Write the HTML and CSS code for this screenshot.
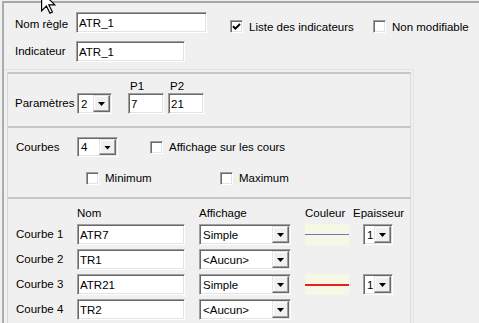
FILE: index.html
```html
<!DOCTYPE html>
<html lang="fr">
<head>
    <meta charset="UTF-8">
    <meta name="viewport" content="width=device-width, initial-scale=1.0">
    <title>Règle ATR_1</title>
    <link rel="stylesheet" href="styles.css">
</head>
<body>
    <div class="frame">
        <div class="head">
            <div class="head-row">
                <span class="lbl lbl-low">Nom règle</span>
                <input class="field w-nom" type="text" value="ATR_1">
                <label class="check check-liste"><span class="box"><svg width="9" height="9" viewBox="0 0 9 9"><path d="M1 4.2 L3.4 6.6 L8 2" fill="none" stroke="#000" stroke-width="2"/></svg></span>Liste des indicateurs</label>
                <label class="check check-top"><span class="box"></span>Non modifiable</label>
            </div>
            <div class="head-row">
                <span class="lbl">Indicateur</span>
                <input class="field w-ind" type="text" value="ATR_1">
            </div>
        </div>

        <div class="outer">
            <!-- paramètres -->
            <div class="group params">
                <span class="lbl-param">Paramètres</span>
                <div class="combo w-nb"><span>2</span><span class="btn"><i class="arrow"></i></span></div>
                <div class="param p1">
                    <span class="plbl">P1</span>
                    <input class="field w-p" type="text" value="7">
                </div>
                <div class="param">
                    <span class="plbl">P2</span>
                    <input class="field w-p" type="text" value="21">
                </div>
            </div>

            <!-- courbes -->
            <div class="group courbes">
                <div class="c-row">
                    <span class="lbl">Courbes</span>
                    <div class="combo w-courbes"><span>4</span><span class="btn"><i class="arrow"></i></span></div>
                    <label class="check check-cours"><span class="box"></span>Affichage sur les cours</label>
                </div>
                <div class="c-row2">
                    <label class="check check-min"><span class="box"></span>Minimum</label>
                    <label class="check"><span class="box"></span>Maximum</label>
                </div>
            </div>

            <!-- tableau des courbes -->
            <div class="group table">
                <span></span>
                <span class="th">Nom</span>
                <span class="th">Affichage</span>
                <span class="th">Couleur</span>
                <span class="th th-ep">Epaisseur</span>

                <span class="lbl">Courbe 1</span>
                <input class="field" type="text" value="ATR7">
                <div class="combo"><span>Simple</span><span class="btn"><i class="arrow"></i></span></div>
                <div class="swatch"><i class="line line-blue"></i></div>
                <div class="combo"><span>1</span><span class="btn"><i class="arrow"></i></span></div>

                <span class="lbl">Courbe 2</span>
                <input class="field" type="text" value="TR1">
                <div class="combo"><span>&lt;Aucun&gt;</span><span class="btn"><i class="arrow"></i></span></div>
                <span></span>
                <span></span>

                <span class="lbl">Courbe 3</span>
                <input class="field" type="text" value="ATR21">
                <div class="combo"><span>Simple</span><span class="btn"><i class="arrow"></i></span></div>
                <div class="swatch"><i class="line line-red"></i></div>
                <div class="combo"><span>1</span><span class="btn"><i class="arrow"></i></span></div>

                <span class="lbl">Courbe 4</span>
                <input class="field" type="text" value="TR2">
                <div class="combo"><span>&lt;Aucun&gt;</span><span class="btn"><i class="arrow"></i></span></div>
                <span></span>
                <span></span>
            </div>
        </div>
    </div>

    <svg class="cursor" width="15" height="23" viewBox="0 0 12.5 19">
        <polygon points="0.5,0.5 0.5,16.5 4.5,12.5 7.5,18.5 9.5,17.5 6.5,11.5 11.5,11.5" fill="#fff" stroke="#000" stroke-width="1"/>
    </svg>
</body>
</html>
```

FILE: styles.css
```css
*{
    margin: 0;
    padding: 0;
    box-sizing: border-box;
}
body{
    background: #f0f0f0;
    font: 11.5px "Liberation Sans", Arial, sans-serif;
    color: #000;
    overflow: hidden;
}
.frame{
    margin: 1px 0 0 2px;
    height: 322px;
    border-top: 2px solid #a6a6a6;
    border-left: 2px solid #acacac;
}
.cursor{
    position: absolute;
    left: 41px;
    top: -9px;
}

/* champs */
.field{
    display: block;
    height: 21px;
    padding: 0 2px;
    font: inherit;
    color: #000;
    background: #fff;
    border: 1px solid;
    border-color: #a0a0a0 #fff #fff #a0a0a0;
    box-shadow: inset 1px 1px 0 #696969, inset -1px -1px 0 #e3e3e3;
    outline: none;
}
.combo{
    display: flex;
    align-items: center;
    height: 21px;
    padding-left: 3px;
    background: #fff;
    border: 1px solid;
    border-color: #a0a0a0 #fff #fff #a0a0a0;
    box-shadow: inset 1px 1px 0 #696969, inset -1px -1px 0 #e3e3e3;
    white-space: nowrap;
}
.combo .btn{
    margin: 1px 1px 1px auto;
    width: 17px;
    height: 17px;
    display: flex;
    align-items: center;
    justify-content: center;
    background: #f0f0f0;
    border: 1px solid;
    border-color: #e3e3e3 #696969 #696969 #e3e3e3;
    box-shadow: inset -1px -1px 0 #a0a0a0, inset 1px 1px 0 #fff;
}
.arrow{
    display: block;
    width: 7px;
    height: 4px;
    background: #000;
    clip-path: polygon(0 0, 100% 0, 50% 100%);
    margin-top: 1px;
}

/* cases à cocher */
.check{
    display: flex;
    align-items: center;
    height: 13px;
    white-space: nowrap;
}
.box{
    width: 13px;
    height: 13px;
    margin-right: 6px;
    display: flex;
    align-items: center;
    justify-content: center;
    background: #fff;
    border: 1px solid;
    border-color: #a0a0a0 #fff #fff #a0a0a0;
    box-shadow: inset 1px 1px 0 #696969, inset -1px -1px 0 #e3e3e3;
}

/* en-tête */
.head{
    padding: 9px 0 7px 11px;
}
.head-row{
    display: flex;
    align-items: flex-start;
    height: 21px;
}
.head-row + .head-row{
    margin-top: 8px;
}
.lbl{
    line-height: 21px;
    white-space: nowrap;
}
.head .lbl{
    width: 61px;
}
.lbl-low{
    padding-top: 2px;
}
.w-nom{ width: 131px; }
.w-ind{ width: 109px; }
.check-top{
    margin-top: 8px;
}
.check-liste{
    margin: 8px 0 0 23px;
    width: 143px;
}

/* groupes */
.outer{
    width: 410px;
    height: 260px;
    padding: 2px 2px 0 3px;
    border-top: 1px solid #e3e3e3;
    border-right: 1px solid #e3e3e3;
}
.group{
    border-top: 2px solid #c6c6c6;
    border-left: 1px solid #d6d6d6;
    border-right: 1px solid #dadada;
}

.params{
    display: flex;
    align-items: flex-end;
    height: 54px;
    padding: 6px 0 12px 7px;
}
.lbl-param{
    width: 62px;
    line-height: 21px;
    padding-top: 1px;
}
.w-nb{ width: 35px; }
.param{
    display: flex;
    flex-direction: column;
}
.p1{
    margin: 0 4px 0 16px;
}
.plbl{
    line-height: 13px;
    padding-left: 2px;
}
.w-p{ width: 36px; }

.courbes{
    height: 71px;
    padding: 9px 0 12px 8px;
}
.c-row{
    display: flex;
    align-items: center;
    height: 20px;
}
.courbes .lbl{
    width: 61px;
}
.w-courbes{
    width: 41px;
    height: 20px;
}
.w-courbes .btn{
    height: 16px;
}
.check-cours{
    margin-left: 32px;
}
.c-row2{
    display: flex;
    align-items: center;
    height: 14px;
    margin-top: 14px;
    padding-left: 70px;
}
.check-min{
    width: 134px;
}

.table{
    height: 140px;
    padding: 8px 0 0 8px;
    display: grid;
    grid-template-columns: 47px 108px 92px 44px 30px;
    grid-template-rows: 13px repeat(4, 21px);
    column-gap: 14px;
    row-gap: 4px;
    align-items: center;
}
.th{
    line-height: 13px;
    white-space: nowrap;
}
.th-ep{
    margin-left: -10px;
}
.table .field{
    width: 108px;
}
.swatch{
    height: 21px;
    background: #f7f7e6;
    display: flex;
    align-items: center;
}
.line{
    display: block;
    width: 100%;
}
.line-blue{
    height: 1px;
    background: #7474c6;
}
.line-red{
    height: 2px;
    background: #e42222;
}
```
